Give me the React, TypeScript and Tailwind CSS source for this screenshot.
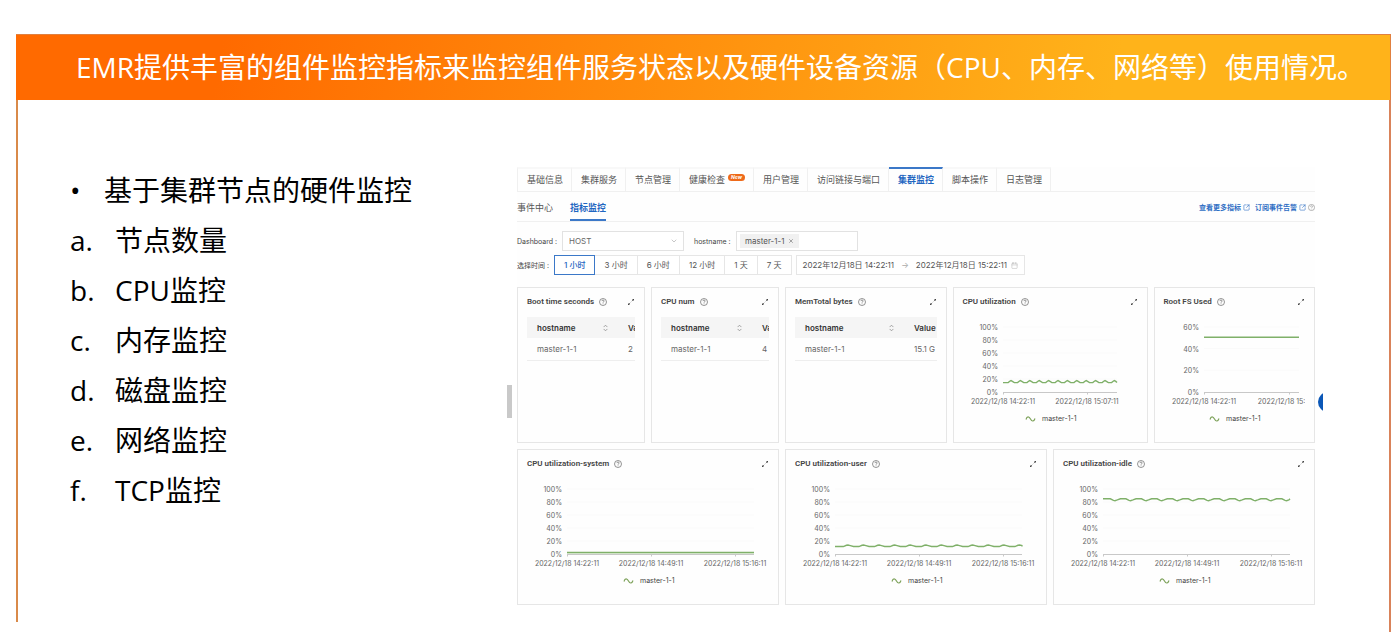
import clsx from 'clsx'
import { Calendar, ChevronDown, SquareArrowOutUpRight, X } from 'lucide-react'
import type { ReactNode } from 'react'

const METRICS = ['节点数量', 'CPU监控', '内存监控', '磁盘监控', '网络监控', 'TCP监控']

const TABS = [
  { label: '基础信息' },
  { label: '集群服务' },
  { label: '节点管理' },
  { label: '健康检查', isNew: true },
  { label: '用户管理' },
  { label: '访问链接与端口' },
  { label: '集群监控', active: true },
  { label: '脚本操作' },
  { label: '日志管理' },
]

const RANGES = ['1 小时', '3 小时', '6 小时', '12 小时', '1 天', '7 天']

// Plot area inside a chart, in px
const PLOT_LEFT = 40
const PLOT_BOTTOM = 77
const PLOT_HEIGHT = 65

type Point = [x: number, y: number]

type ChartProps = {
  max: number
  step: number
  width: number
  ticks: { x: number; label: string }[]
  points: Point[]
  legendX: number
  filled?: boolean
}

// Flat series with one small bump (or dip, for a negative amplitude) per period
function ripple(
  width: number,
  base: number,
  amplitude: number,
  period: number,
  start: number,
): Point[] {
  const points: Point[] = [[0, base]]
  for (let x = start; x < width; x += period) {
    points.push([x - period * 0.3, base])
    points.push([x - period * 0.1, base + amplitude * 0.8])
    points.push([x, base + amplitude])
    points.push([x + period * 0.15, base + amplitude * 0.6])
    points.push([x + period * 0.35, base])
  }
  return [...points.filter(([x]) => x >= 0 && x < width), [width, base]]
}

function HelpIcon({ className }: { className?: string }) {
  return (
    <svg viewBox="0 0 16 16" fill="none" stroke="currentColor" className={className}>
      <circle cx="8" cy="8" r="7" strokeWidth="1.4" />
      <path
        d="M5.800 6.200c0-1.300 1-2.200 2.200-2.200s2.300.8 2.300 2c0 1.600-2.200 1.700-2.200 3.400M8.100 11v1.200"
        strokeWidth="1.4"
      />
    </svg>
  )
}

function ExpandIcon() {
  return (
    <svg viewBox="0 0 16 16" fill="none" stroke="currentColor" className="size-2">
      <path d="M9.500 6.500 13 3M6.500 9.500 3 13" strokeWidth="1.4" />
      <path d="M10 2h4v4zM2 10v4h4z" fill="currentColor" stroke="none" />
    </svg>
  )
}

function SortIcon() {
  return (
    <svg viewBox="0 0 8 12" fill="none" stroke="#888" className="w-[5px] h-2">
      <path d="M1 4.500 4 1.500l3 3M1 7.500l3 3 3-3" strokeWidth="1.2" />
    </svg>
  )
}

function Card({
  title,
  className,
  children,
}: {
  title: string
  className: string
  children: ReactNode
}) {
  return (
    <article
      className={clsx(
        'border border-[#e6e6e6] bg-[#fefefe] px-[9px] min-h-[156px] min-w-0 overflow-hidden',
        className,
      )}
    >
      <header className="flex items-center h-[27px] text-[#444]">
        <h3 className="font-['Roboto',sans-serif] text-[8px] font-semibold whitespace-nowrap">
          {title}
        </h3>
        <HelpIcon className="size-2 ml-[5px] text-[#666]" />
        <button type="button" aria-label={`展开 ${title}`} className="ml-auto">
          <ExpandIcon />
        </button>
      </header>
      {children}
    </article>
  )
}

function HostTable({ value, wide }: { value: string; wide?: boolean }) {
  return (
    <div className="overflow-hidden mt-[2px]">
      <table className="table-fixed w-[180px] text-left text-[8px] whitespace-nowrap">
        <thead>
          <tr className="h-[21px] bg-[#f5f5f5] text-[#333]">
            <th className={clsx('px-[10px] font-semibold', wide ? 'w-[109px]' : 'w-[91px]')}>
              <span className="flex items-center justify-between">
                hostname
                <SortIcon />
              </span>
            </th>
            <th className="pl-[10px] font-semibold">Value</th>
          </tr>
        </thead>
        <tbody>
          <tr className="h-[22px] border-b border-[#eee] text-[#666]">
            <td className="pl-[10px]">master-1-1</td>
            <td className="pl-[10px]">{value}</td>
          </tr>
        </tbody>
      </table>
    </div>
  )
}

function Chart({ max, step, width, ticks, points, legendX, filled }: ChartProps) {
  const toY = (v: number) => PLOT_BOTTOM - (v / max) * PLOT_HEIGHT
  const line = points.map(([x, y]) => `${PLOT_LEFT + x},${toY(y).toFixed(2)}`).join(' ')
  const right = PLOT_LEFT + width
  const levels = Array.from({ length: max / step + 1 }, (_, i) => i * step)

  return (
    <svg className="block w-full h-[112px] overflow-hidden text-[7px]" fill="#666">
      {levels.map((v) => (
        <g key={v}>
          <text x={PLOT_LEFT - 5} y={toY(v) + 3} textAnchor="end">
            {v}%
          </text>
          {v > 0 && <path d={`M${PLOT_LEFT} ${toY(v)}H${right}`} stroke="#fafafa" />}
        </g>
      ))}
      <path
        d={`M${PLOT_LEFT} ${PLOT_BOTTOM + 0.5}H${right}`}
        stroke="#c8c8c8"
      />
      {ticks.map((tick) => (
        <g key={tick.x}>
          <path d={`M${PLOT_LEFT + tick.x + 0.5} ${PLOT_BOTTOM}v2.500`} stroke="#c8c8c8" />
          <text x={PLOT_LEFT + tick.x} y="89" textAnchor="middle">
            {tick.label}
          </text>
        </g>
      ))}
      {filled && (
        <polygon
          points={`${PLOT_LEFT},${PLOT_BOTTOM} ${line} ${right},${PLOT_BOTTOM}`}
          fill="#cfe3c6"
        />
      )}
      <polyline points={line} fill="none" stroke="#7fb069" strokeWidth="1.4" />
      <path
        d={`M${legendX} 104.500c1-3.500 3-3.500 4.500-.500s3.500 2.500 4.500-.500`}
        fill="none"
        stroke="#7fa35c"
        strokeWidth="1.2"
      />
      <text x={legendX + 16} y="106" fill="#444">
        master-1-1
      </text>
    </svg>
  )
}

const DAY_TICKS = [
  { x: 0, label: '2022/12/18 14:22:11' },
  { x: 84, label: '2022/12/18 14:49:11' },
  { x: 168, label: '2022/12/18 15:16:11' },
]

function Filters() {
  return (
    <form className="text-[8px] text-[#444] whitespace-nowrap">
      <div className="flex items-center mt-[9px]">
        <label htmlFor="dashboard" className="w-[45px] text-[7px]">
          Dashboard :
        </label>
        <div className="grid items-center w-[122px]">
          <select
            id="dashboard"
            className="col-start-1 row-start-1 appearance-none h-5 border border-[#e2e2e2] px-[6px] text-[#666] bg-white"
          >
            <option>HOST</option>
          </select>
          <ChevronDown className="col-start-1 row-start-1 justify-self-end mr-[6px] size-2 text-[#aaa] pointer-events-none" />
        </div>
        <label htmlFor="hostname" className="ml-[10px] w-[42px] text-[7px]">
          hostname :
        </label>
        <div className="flex items-center w-[122px] h-5 border border-[#e2e2e2] bg-white px-[3px]">
          <span className="flex items-center gap-[3px] h-[14px] px-[5px] bg-[#f1f1f1] text-[#555]">
            master-1-1
            <button type="button" aria-label="移除 master-1-1">
              <X className="size-[6px]" />
            </button>
          </span>
          <input id="hostname" className="w-0 flex-1 outline-none" />
        </div>
      </div>
      <div className="flex items-center mt-1">
        <span className="w-[37px] text-[7px]">选择时间 :</span>
        <div className="flex">
          {RANGES.map((range, i) => (
            <button
              key={range}
              type="button"
              className={clsx(
                'h-5 border px-[9px] bg-white',
                i === 0
                  ? 'border-[#3b78c8] text-[#1f66c1] font-medium'
                  : 'border-[#e6e6e6] border-l-0 text-[#555]',
              )}
            >
              {range}
            </button>
          ))}
        </div>
        <button
          type="button"
          className="flex items-center ml-1 h-5 border border-[#e6e6e6] bg-white px-[6px] text-[#555]"
        >
          2022年12月18日 14:22:11
          <span className="mx-[7px] text-[#aaa]">→</span>
          2022年12月18日 15:22:11
          <Calendar className="ml-1 size-[7px] text-[#bbb]" />
        </button>
      </div>
    </form>
  )
}

function Console() {
  return (
    <section className="relative bg-[#fefefe] font-['Inter','Noto_Sans_CJK_SC',sans-serif] leading-none">
      <nav className="flex border-b border-[#f0f0f0] text-[9px]">
        {TABS.map((tab, i) => (
          <a
            key={tab.label}
            href="#"
            className={clsx(
              'flex items-center h-6 pl-[9px] pr-2 pb-[2px] border-r border-r-[#f0f0f0] border-t-2 whitespace-nowrap',
              i === 0 && 'border-l border-l-[#f0f0f0]',
              tab.active
                ? 'border-t-[#3b78c8] text-[#1f66c1] font-bold'
                : 'border-t-[#f8f8f8] text-[#555]',
            )}
          >
            {tab.label}
            {tab.isNew && (
              <span className="flex items-center mb-1 ml-[3px] h-[7px] px-[3px] rounded-full bg-[#ee6a1a] text-[5px] italic font-bold text-white">
                New
              </span>
            )}
          </a>
        ))}
      </nav>

      <div className="flex h-[30px] border-b border-[#f0f0f0] text-[9px]">
        <a
          href="#"
          className="flex items-center mr-[17px] pt-1 border-b-2 border-transparent text-[#555]"
        >
          事件中心
        </a>
        <a
          href="#"
          className="flex items-center pt-1 border-b-2 border-[#3b78c8] text-[#1f66c1] font-bold"
        >
          指标监控
        </a>
        <div className="flex items-center ml-auto pt-[2px] text-[7px] font-bold text-[#2f6fc4]">
          <a href="#" className="flex items-center">
            查看更多指标
            <SquareArrowOutUpRight className="ml-[2px] size-[7px]" />
          </a>
          <a href="#" className="flex items-center ml-[5px]">
            订阅事件告警
            <SquareArrowOutUpRight className="ml-[2px] size-[7px]" />
          </a>
          <HelpIcon className="size-[7px] ml-[2px] text-[#888]" />
        </div>
      </div>

      <Filters />

      <div className="grid grid-cols-24 gap-x-[6px] gap-y-[6px] mt-3">
        <Card title="Boot time seconds" className="col-span-4">
          <HostTable value="2" />
        </Card>
        <Card title="CPU num" className="col-span-4">
          <HostTable value="4" />
        </Card>
        <Card title="MemTotal bytes" className="col-span-5">
          <HostTable value="15.1 G" wide />
        </Card>
        <Card title="CPU utilization" className="col-span-6">
          <Chart
            max={100}
            step={20}
            width={114}
            ticks={[
              { x: 0, label: '2022/12/18 14:22:11' },
              { x: 84, label: '2022/12/18 15:07:11' },
            ]}
            points={ripple(114, 14.5, 3, 9.4, 8)}
            legendX={63}
          />
        </Card>
        <Card title="Root FS Used" className="col-span-5">
          <Chart
            max={60}
            step={20}
            width={95}
            ticks={[
              { x: 0, label: '2022/12/18 14:22:11' },
              { x: 85, label: '2022/12/18 15:16:11' },
            ]}
            points={[[0, 50.5], [95, 50.5]]}
            legendX={46}
          />
        </Card>
        <Card title="CPU utilization-system" className="col-span-8">
          <Chart
            max={100}
            step={20}
            width={187}
            ticks={DAY_TICKS}
            points={[[0, 2.5], [187, 2.5]]}
            legendX={97}
            filled
          />
        </Card>
        <Card title="CPU utilization-user" className="col-span-8">
          <Chart
            max={100}
            step={20}
            width={187}
            ticks={DAY_TICKS}
            points={ripple(187, 11.5, 2.4, 15.6, 13)}
            legendX={97}
          />
        </Card>
        <Card title="CPU utilization-idle" className="col-span-8">
          <Chart
            max={100}
            step={20}
            width={187}
            ticks={DAY_TICKS}
            points={ripple(187, 85, -3, 15.6, 12)}
            legendX={97}
          />
        </Card>
      </div>

      {/* Side menu handle and the floating help bubble, cut off at the edges */}
      <div className="absolute -left-[10px] top-[218px] w-[5px] h-[33px] bg-[#c9c9c9]" />
      <div className="absolute -right-2 top-[225px] w-[5px] h-5 overflow-hidden">
        <div className="size-5 rounded-full bg-[#0b57b7]" />
      </div>
    </section>
  )
}

export default function App() {
  return (
    <div className="flex flex-col min-h-screen bg-white pt-[34px] pl-4 pr-[9px] font-['Open_Sans','Noto_Sans_CJK_SC',sans-serif]">
      <header className="border-t border-r border-[#e08040] bg-linear-[100deg,#ff6a00_15%,#ffb31a_80%] pl-[60px] py-[5px]">
        <h1 className="text-[28px] leading-[55px] text-white whitespace-nowrap">
          EMR提供丰富的组件监控指标来监控组件服务状态以及硬件设备资源（CPU、内存、网络等）使用情况。
        </h1>
      </header>
      <main className="flex flex-1 border-r-2 border-[#d9835a]">
        <section className="w-[501px] shrink-0 mb-[10px] border-l-2 border-[#d98a4a] pt-[65px] pl-[52px] text-[28px] leading-[50px] text-black">
          <h2 className="flex">
            <span className="w-[34px]">•</span>
            基于集群节点的硬件监控
          </h2>
          <ol>
            {METRICS.map((metric, i) => (
              <li key={metric} className="flex">
                <span className="w-[45px]">{String.fromCharCode(97 + i)}.</span>
                {metric}
              </li>
            ))}
          </ol>
        </section>
        <div className="flex-1 min-w-0 pt-[67px] pr-[74px] pb-6">
          <Console />
        </div>
      </main>
    </div>
  )
}
